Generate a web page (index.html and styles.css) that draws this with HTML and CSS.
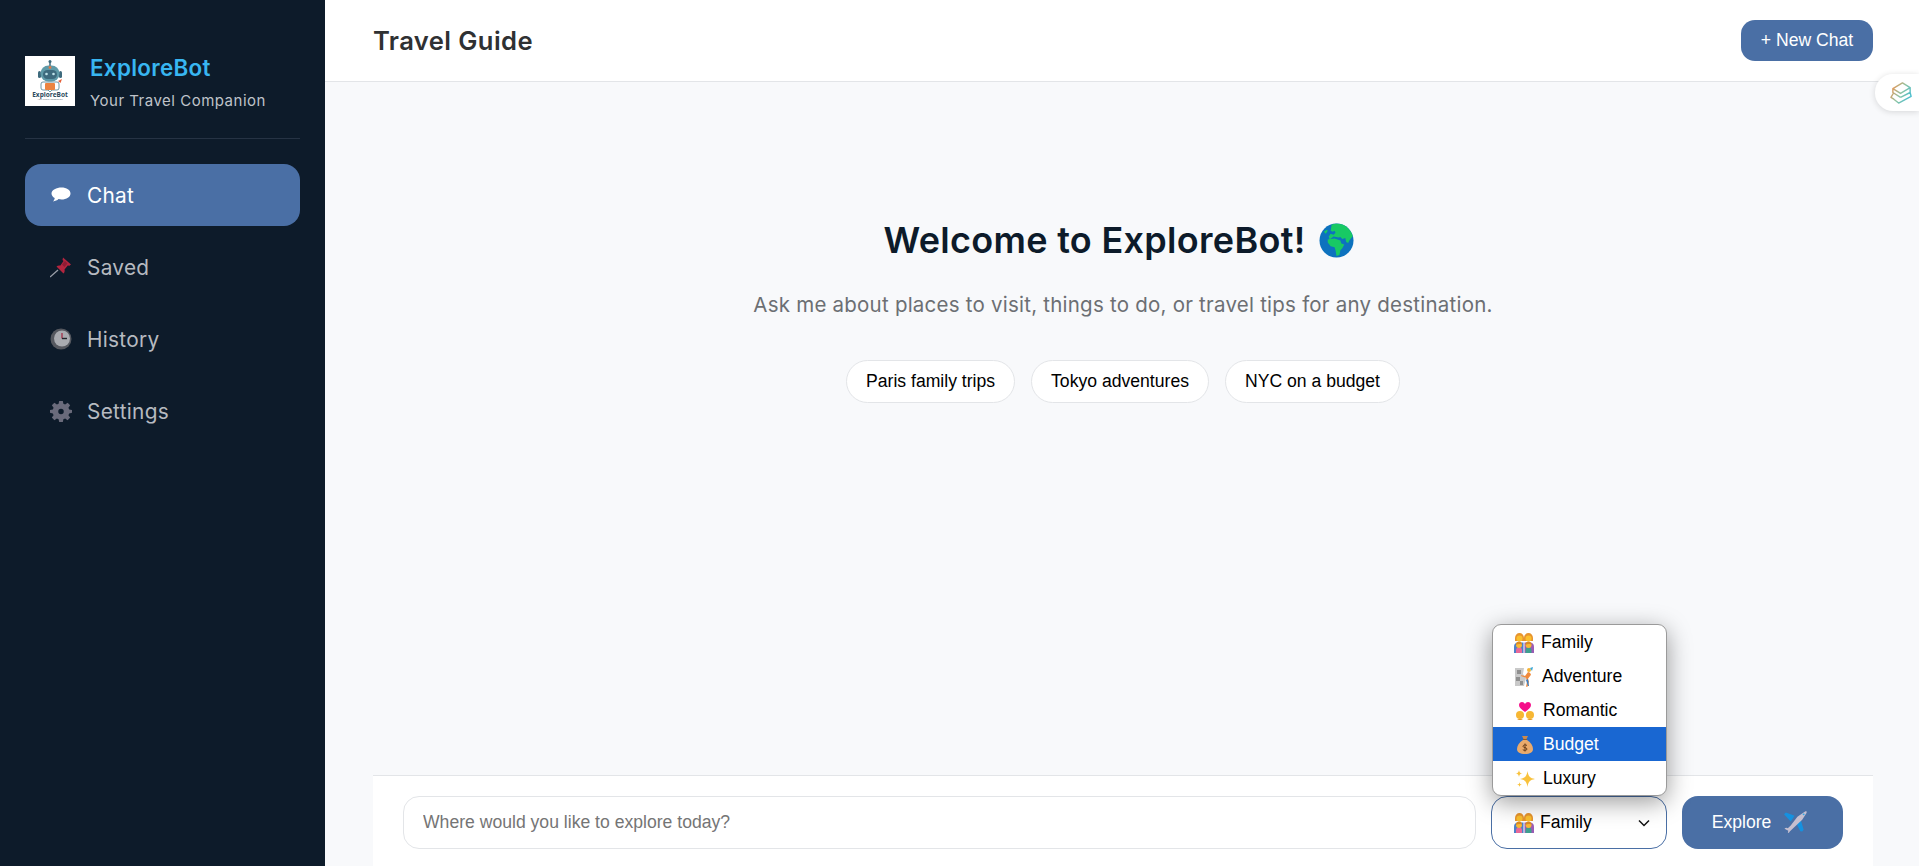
FILE: index.html
```html
<!DOCTYPE html>
<html lang="en">
<head>
<meta charset="utf-8">
<title>ExploreBot</title>
<link rel="stylesheet" href="styles.css">
</head>
<body>
<svg class="defs" width="0" height="0" aria-hidden="true">
  <defs>
    <symbol id="family" viewBox="0 0 20 20">
      <path d="M0 20v-6c0-3 1.500-4.500 4-4.500h5.500V20z" fill="#4d7fc9"/>
      <path d="M20 20v-6c0-3-1.500-4.500-4-4.500h-5.500V20z" fill="#9c5bb5"/>
      <path d="M1 5c0-3 2-5 4.500-5S10 2 10 5v3H1z" fill="#e8952e"/>
      <path d="M10 5c0-3 2-5 4.500-5S19 2 19 5v3h-9z" fill="#e8952e"/>
      <circle cx="5.500" cy="5.500" r="3" fill="#fbc02d"/>
      <circle cx="14.500" cy="5.500" r="3" fill="#fbc02d"/>
      <path d="M2 20v-3c0-1.700 1.300-2.800 3-2.800s3 1.100 3 2.800v3z" fill="#e86a9a"/>
      <path d="M11.500 20v-3c0-1.700 1.300-2.800 3-2.800s3 1.100 3 2.800v3z" fill="#3f9f8f"/>
      <circle cx="5" cy="12" r="3" fill="#f9b935"/>
      <circle cx="14.500" cy="12" r="3" fill="#f9b935"/>
      <path d="M2 12c0-2.500 1.300-3.500 3-3.500S8 9.500 8 12c-1-1.200-4-1.200-6 0zM11.500 12c0-2.500 1.300-3.500 3-3.500s3 1 3 3.500c-1-1.200-4-1.200-6 0z" fill="#d98a26"/>
    </symbol>
  </defs>
</svg>
<div class="app">
  <aside class="sidebar">
    <div class="brand">
      <svg class="logo" viewBox="0 0 50 50" role="img" aria-label="ExploreBot logo">
        <rect width="50" height="50" fill="#fff"/>
        <path d="M25 5v5" stroke="#3d6a7d" stroke-width="1.500"/>
        <circle cx="25" cy="5.500" r="1.500" fill="#3d6a7d"/>
        <rect x="13" y="15" width="3" height="7" rx="1.500" fill="#3d6a7d"/>
        <rect x="34" y="15" width="3" height="7" rx="1.500" fill="#3d6a7d"/>
        <rect x="15.500" y="9.500" width="19" height="16" rx="8" fill="#5f9aa8"/>
        <rect x="18" y="14" width="14" height="9" rx="4.500" fill="#3d6a7d"/>
        <circle cx="21.500" cy="18" r="1.300" fill="#bfe3ea"/>
        <circle cx="28.500" cy="18" r="1.300" fill="#bfe3ea"/>
        <circle cx="25" cy="11.500" r="1.400" fill="#e07a4a"/>
        <path d="M18 26h14a2 2 0 0 1 2 2v4a2 2 0 0 1-2 2h-5l-2 2-2-2h-5a2 2 0 0 1-2-2v-4a2 2 0 0 1 2-2z" fill="#fff" stroke="#4d7f8e" stroke-width="0.800"/>
        <rect x="20" y="27" width="10" height="7" rx="1" fill="#ec8440"/>
        <path d="M33 25l4-2-1.500 4z" fill="#e5603a"/>
        <text class="logo-text" x="25" y="40.500" text-anchor="middle">ExploreBot</text>
        <text class="logo-sub" x="25" y="43.800" text-anchor="middle">Your Travel Companion</text>
      </svg>
      <div class="brand-copy">
        <div class="brand-name">ExploreBot</div>
        <div class="brand-tag">Your Travel Companion</div>
      </div>
    </div>
    <nav class="nav">
      <a class="nav-item active">
        <svg class="nav-icon" viewBox="0 0 22 22"><path d="M11.500 3.500c5 0 9 2.500 9 6s-4 6-9 6c-1 0-2-.1-3-.4-1.200 1.300-3.200 2.200-5.500 2.400 1-1 1.600-2.100 1.700-3.400C2.800 13 1.500 11.300 1.500 9.500c0-3.500 5-6 10-6z" fill="#fff"/></svg>
        <span>Chat</span>
      </a>
      <a class="nav-item">
        <svg class="nav-icon" viewBox="0 0 22 22"><path d="M0 21l8-7" stroke="#9a9fa8" stroke-width="1.300"/><path d="M13 1.500l8 7-2 1.500-1-.7-3.500 4.200c.5 1.500 0 3-1 4L6.500 10.500c1-1 2.500-1.300 3.900-.9L13.500 5l-1-1z" fill="#b3253f"/><path d="M15 5l2.500 2.500-3 3.500-2.500-2.500z" fill="#8e1c34"/></svg>
        <span>Saved</span>
      </a>
      <a class="nav-item">
        <svg class="nav-icon" viewBox="0 0 22 22"><circle cx="11" cy="11" r="10.500" fill="#55585f"/><circle cx="12" cy="10.500" r="8" fill="#a9abb0"/><path d="M12 10.500V5" stroke="#a3243f" stroke-width="1.200"/><path d="M12 10.500h5" stroke="#22252b" stroke-width="1.400"/></svg>
        <span>History</span>
      </a>
      <a class="nav-item">
        <svg class="nav-icon" viewBox="0 0 24 24"><path fill="#6a6b7b" fill-rule="evenodd" d="M10 1h4l.6 3.100 1.900.8L19.200 3l2.800 2.800-1.900 2.700.8 1.900L24 11v3l-3.100.6-.8 1.900 1.900 2.700-2.800 2.800-2.700-1.900-1.900.8L14 24h-4l-.6-3.100-1.900-.8L4.800 22 2 19.200l1.900-2.700-.8-1.900L0 14v-3l3.100-.6.800-1.900L2 5.800 4.800 3l2.700 1.900 1.900-.8zM12 9.500a3 3 0 1 0 0 6 3 3 0 0 0 0-6z"/></svg>
        <span>Settings</span>
      </a>
    </nav>
  </aside>
  <main class="main">
    <header class="topbar">
      <h2 class="page-title">Travel Guide</h2>
      <button class="new-chat">+ New Chat</button>
    </header>
    <section class="welcome">
      <h1 class="welcome-title">Welcome to ExploreBot!
        <svg class="globe" viewBox="0 0 36 36"><circle cx="18" cy="18" r="17.500" fill="#0d72be"/><path d="M13 1.500c3-1 8-1.200 11 0 5 2 9 6 10.700 12l-3.200 4-1.500 3-2-1-1-4-3 1-2-2-2 .5-5-1-4 3-1-3 2-3 3 1 2-2-1-2-2 1-2-1zM9 17l7-1 3 1 3 1 1 3 3 1-2 4-2 2-1 5-3 1-1-6-1-3-4-1-3-4z" fill="#18c964"/><path d="M5 9l3-2 1 1-2 3z" fill="#18c964"/></svg>
      </h1>
      <p class="welcome-sub">Ask me about places to visit, things to do, or travel tips for any destination.</p>
      <div class="chips">
        <button class="chip">Paris family trips</button>
        <button class="chip">Tokyo adventures</button>
        <button class="chip">NYC on a budget</button>
      </div>
    </section>
    <div class="composer">
      <input class="query" type="text" placeholder="Where would you like to explore today?">
      <div class="select-wrap">
        <ul class="menu">
          <li class="opt opt-a"><svg class="emoji"><use href="#family"/></svg>Family</li>
          <li class="opt opt-b"><svg class="emoji" viewBox="0 0 20 20"><path d="M1 1h9l-1 6 3 4-2 8H1z" fill="#c9c9c9"/><path d="M3 3h4v4H3zM2 10h4v4H2zM6 14h3v4H6z" fill="#8f8f8f"/><circle cx="15" cy="3" r="2" fill="#f5b335"/><path d="M14 5l-3 4-4-1 .5 1.200 4.500 1.500 1 4-1 5h1.500l1.500-5-1-3 3-4-1-2z" fill="#f08a3c"/><path d="M16 1l3-1-1 4z" fill="#3aa8d8"/><path d="M12 13l2 6h1l-1-7z" fill="#3a7fc4"/></svg>Adventure</li>
          <li class="opt opt-c"><svg class="emoji" viewBox="0 0 20 20"><path d="M10 11C6 8 4 6.500 4 4c0-2 1.500-3 3-3 1.300 0 2.400.7 3 2 .6-1.300 1.700-2 3-2 1.500 0 3 1 3 3 0 2.500-2 4-6 7z" fill="#f50f8a"/><circle cx="5" cy="14" r="4" fill="#f7b733"/><circle cx="15" cy="14" r="4" fill="#f7b733"/><path d="M2 19c1-1.500 5-1.500 6 0zM12 19c1-1.500 5-1.500 6 0z" fill="#e29b2f"/></svg>Romantic</li>
          <li class="opt selected opt-c"><svg class="emoji" viewBox="0 0 20 20"><path d="M7 1h6l-2 4h-2z" fill="#c98a4f"/><path d="M8 5h4c4 2.500 6 6 6 9 0 3.500-3 5-8 5s-8-1.500-8-5c0-3 2-6.500 6-9z" fill="#eaaa6b"/><path d="M8 4.500h4" stroke="#8a5a2c" stroke-width="1.200"/><path d="M12 10.500c-1-1-4-.8-4 .8s4 1 4 2.700-3 1.700-4.200.7M10 8.500v8" stroke="#6b3f1b" stroke-width="1" fill="none"/></svg>Budget</li>
          <li class="opt opt-c"><svg class="emoji" viewBox="0 0 20 20"><path d="M12.500 2c.9 5.500 2.500 7.100 7.500 8-5 .9-6.600 2.500-7.500 8-.9-5.500-2.500-7.100-7.500-8 5-.9 6.600-2.500 7.500-8z" fill="#f9c23c"/><path d="M4 1c.4 2.500 1 3.100 3.500 3.500C5 4.900 4.400 5.500 4 8c-.4-2.500-1-3.100-3.500-3.500C3 4.100 3.600 3.500 4 1zM4.500 13c.3 1.900.7 2.300 2.500 2.500-1.800.3-2.200.7-2.500 2.500-.3-1.800-.7-2.200-2.500-2.500 1.800-.2 2.200-.6 2.500-2.500z" fill="#f9c23c"/></svg>Luxury</li>
        </ul>
        <button class="select">
          <svg class="emoji"><use href="#family"/></svg><span class="select-label">Family</span>
          <svg class="chevron" viewBox="0 0 12 8"><path d="M1 1.500l5 5 5-5" fill="none" stroke="#111" stroke-width="1.500"/></svg>
        </button>
      </div>
      <button class="explore">Explore
        <svg class="plane" viewBox="0 0 24 24"><path d="M11 5L2 1.500 0 3.500 7 11zM13 13l4 8 2 .5 1.500-2-3-10z" fill="#1591e0"/><path d="M22 .5c1.500-.5 2 0 1.500 1.500L19 9 9 18.500l-3 3-1 1.500-1-.5.500-2L1.500 19 .5 18l2-.5 1.500.5 3-3L14 6z" fill="#c5bfd0"/><circle cx="20.500" cy="3.500" r="1" fill="#2fa7e6"/></svg>
      </button>
    </div>
  </main>
</div>
<div class="float-tab">
  <svg viewBox="0 0 24 24" class="float-icon">
    <defs><linearGradient id="fg" x1="0" y1="0.200" x2="1" y2="0.800"><stop offset="0" stop-color="#f2924e"/><stop offset="0.500" stop-color="#8cc4a4"/><stop offset="1" stop-color="#3fbdd6"/></linearGradient></defs>
    <path d="M3 8l10-6 8 5-10 6zM3 8v4l8 5M21 7v5M4 12l-3 5 3 2 5 4 13-7-1-4-10 5" fill="none" stroke="url(#fg)" stroke-width="1.500" stroke-linejoin="round"/>
  </svg>
</div>
</body>
</html>
```

FILE: styles.css
```css
* { box-sizing: border-box; }
html, body { margin: 0; height: 100%; overflow: hidden; }
body { font-family: "Liberation Sans", Arial, sans-serif; color: #000; background: #f8f9fb; }
.defs { position: absolute; }
.app { display: flex; height: 866px; }

.sidebar { width: 325px; flex: none; background: #0d1b2a; padding: 56px 25px 0; color: #fff; font-family: Inter, "Open Sans", sans-serif; }
.brand { display: flex; gap: 15px; height: 83px; border-bottom: 1px solid #263344; align-items: flex-start; }
.logo { width: 50px; height: 50px; flex: none; }
.logo-text { font: 700 6.500px "Open Sans", sans-serif; fill: #2b4a5c; }
.logo-sub { font: 400 2.300px "Open Sans", sans-serif; fill: #5a6b75; }
.brand-copy { margin-top: -2px; }
.brand-name { font-size: 22.400px; font-weight: 600; line-height: 28px; color: #38b6f1; letter-spacing: 0.300px; }
.brand-tag { font-size: 15px; line-height: 22px; margin-top: 8px; color: #bfc3c9; letter-spacing: 0.500px; }

.nav { display: flex; flex-direction: column; gap: 10px; margin-top: 25px; }
.nav-item { display: flex; align-items: center; gap: 15px; height: 62px; padding: 0 25px; border-radius: 16px; font-size: 20.800px; letter-spacing: 0.300px; color: #b6bac0; }
.nav-item.active { background: #4a6fa5; color: #fff; }
.nav-icon { width: 22px; height: 22px; flex: none; }

.main { flex: 1; min-width: 0; display: flex; flex-direction: column; padding: 0 46px 0 48px; position: relative; }
.topbar { display: flex; align-items: center; justify-content: space-between; height: 82px; margin: 0 -46px 0 -48px; padding: 0 46px 0 48px; background: #fff; border-bottom: 1px solid #e3e5e8; }
.page-title { margin: 0; font: 600 25.600px Inter, sans-serif; letter-spacing: 0.400px; color: #2f3133; }
.new-chat { width: 132px; height: 41px; border: 0; border-radius: 14px; background: #4a6fa5; color: #fff; font: 17.600px "Liberation Sans", Arial, sans-serif; }

.welcome { flex: 1; display: flex; flex-direction: column; align-items: center; padding-top: 133px; }
.welcome-title { margin: 0 9px 0 0; display: flex; align-items: center; gap: 13px; font: 600 36px/50px Inter, sans-serif; letter-spacing: 0.300px; color: #0d1b2a; white-space: nowrap; }
.globe { width: 35px; height: 35px; }
.welcome-sub { margin: 25px 0 0; font: 400 20.500px/29px Inter, sans-serif; letter-spacing: 0.230px; color: #6c6f73; }
.chips { display: flex; gap: 16px; margin-top: 41px; }
.chip { height: 43px; padding: 0 19px; background: #fff; border: 1px solid #e3e5e8; border-radius: 22px; font: 17.600px "Liberation Sans", Arial, sans-serif; color: #000; }

.composer { height: 91px; flex: none; display: flex; align-items: flex-start; gap: 15px; padding: 20px 30px 0; background: #fff; border-top: 1px solid #e3e5e8; }
.query { flex: 1; min-width: 0; height: 53px; padding: 0 19px; border: 1px solid #e3e5e8; border-radius: 16px; font: 17.600px "Liberation Sans", Arial, sans-serif; background: #fff; }
.query::placeholder { color: #757575; opacity: 1; }
.select-wrap { position: relative; width: 176px; height: 53px; flex: none; }
.select { display: flex; align-items: center; width: 100%; height: 100%; padding: 0 16px 0 22px; border: 1px solid #4a6fa5; border-radius: 16px; background: #fff; font: 17.600px "Liberation Sans", Arial, sans-serif; color: #000; }
.select-label { margin-left: 6px; flex: 1; text-align: left; }
.chevron { width: 12px; height: 8px; }
.emoji { width: 20px; height: 20px; flex: none; }
.menu { position: absolute; left: 1px; bottom: 53px; width: 175px; margin: 0; padding: 0; list-style: none; background: #fff; border: 1px solid #9a9a9a; border-radius: 9px; overflow: hidden; box-shadow: 0 6px 24px rgba(0, 0, 0, .4); z-index: 2; }
.opt { display: flex; align-items: center; height: 34px; padding-top: 1px; font-size: 17.600px; padding-left: 21px; gap: 7px; color: #000; }
.opt-b { gap: 8px; }
.opt-c { padding-left: 22px; gap: 8px; }
.selected { background: #1967d2; color: #fff; }
.explore { width: 161px; height: 53px; flex: none; display: flex; align-items: center; justify-content: center; gap: 13px; padding: 0 6px 0 0; border: 0; border-radius: 16px; background: #4a6fa5; color: #fff; font: 17.600px "Liberation Sans", Arial, sans-serif; }
.plane { width: 23px; height: 23px; }

.float-tab { position: absolute; left: 1875px; top: 74px; width: 44px; height: 37px; display: flex; align-items: center; padding-left: 15px; background: #fff; border-radius: 18px 0 0 18px; box-shadow: 0 1px 6px rgba(0, 0, 0, .14); }
.float-icon { width: 23px; height: 23px; }
```
